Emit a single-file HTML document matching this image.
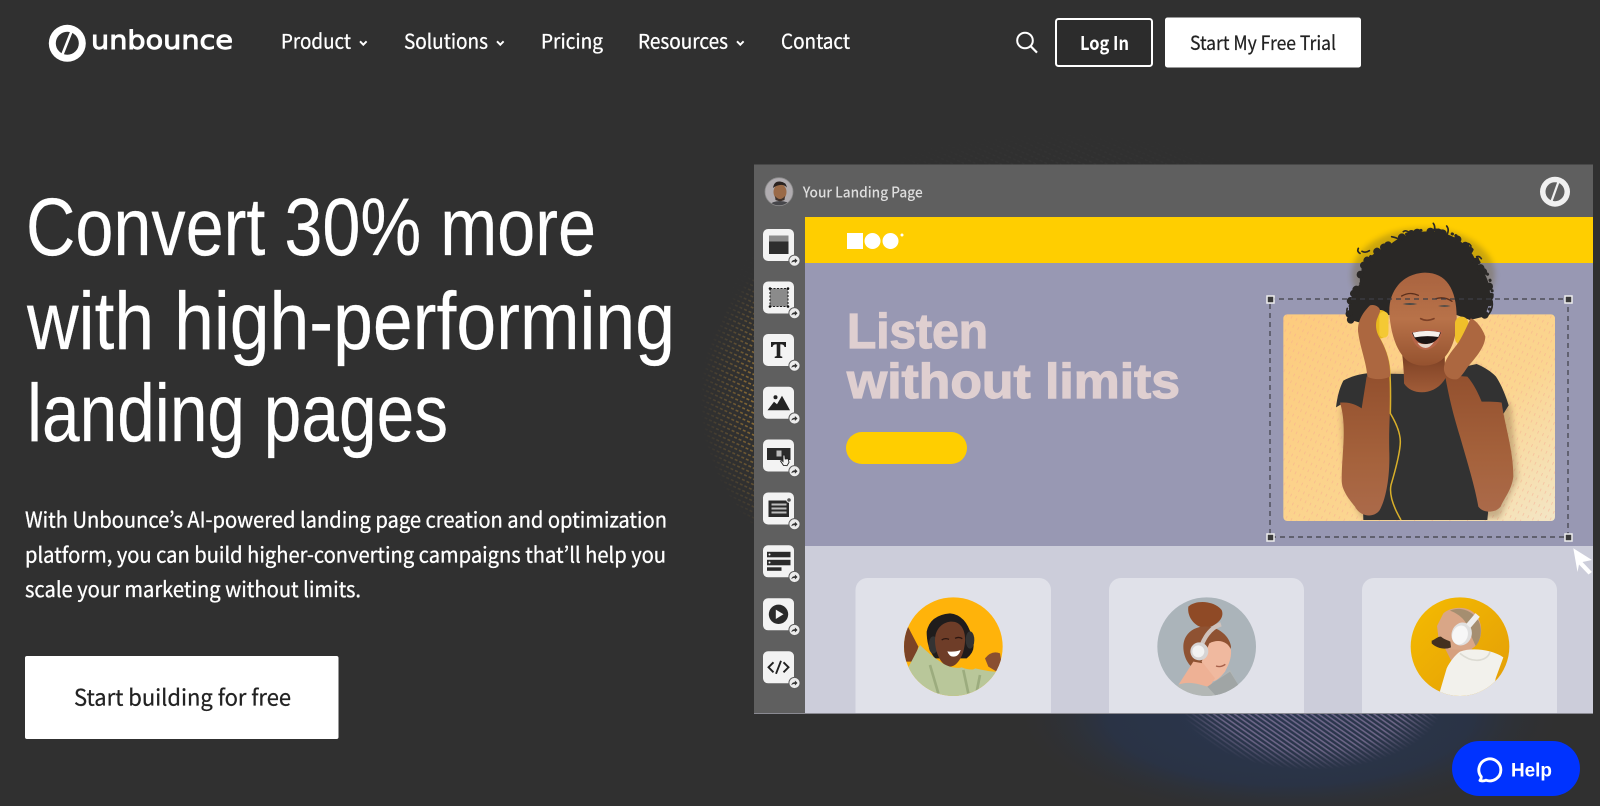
<!DOCTYPE html>
<html lang="en"><head><meta charset="utf-8"><title>Unbounce</title>
<style>
html,body{margin:0;padding:0;background:#303030;width:1600px;height:806px;overflow:hidden}
svg{display:block}
.s{font-family:"Noto Sans CJK JP","Liberation Sans",sans-serif;fill:#fff}
.w{stroke:#fff;stroke-width:.3}
.d{fill:#222;stroke:#222;stroke-width:.25}
.h{font-family:"Liberation Sans",sans-serif;fill:#fff;font-size:82px;stroke:#fff;stroke-width:.2}
.l{font-family:"Liberation Sans",sans-serif;font-weight:700;font-size:49px;fill:#dfcfd0;stroke:#dfcfd0;stroke-width:1.2}
</style></head><body>
<svg width="1600" height="806" viewBox="0 0 1600 806" xmlns="http://www.w3.org/2000/svg">
<defs>
<pattern id="dots" width="5" height="5" patternUnits="userSpaceOnUse" patternTransform="rotate(25)"><rect width="3" height="1.6" fill="#fff"/></pattern>
<pattern id="dotO" width="5" height="5" patternUnits="userSpaceOnUse" patternTransform="rotate(25)"><rect width="3" height="1.6" fill="#c18f38"/></pattern>
<pattern id="dotL" width="4" height="4" patternUnits="userSpaceOnUse" patternTransform="rotate(35)"><rect width="4" height="1.6" fill="#a28db8"/></pattern>
<pattern id="dash" width="16" height="22" patternUnits="userSpaceOnUse" patternTransform="rotate(25)"><rect width="2.5" height="9" fill="#f6a890" opacity=".55"/></pattern>
<radialGradient id="f1"><stop offset="0" stop-color="#fff"/><stop offset=".72" stop-color="#fff"/><stop offset="1" stop-color="#000"/></radialGradient>
<radialGradient id="f2"><stop offset="0" stop-color="#fff"/><stop offset=".45" stop-color="#999"/><stop offset="1" stop-color="#000"/></radialGradient>
<radialGradient id="blue"><stop offset="0" stop-color="#2b3750"/><stop offset=".65" stop-color="#2a3345"/><stop offset="1" stop-color="#303030" stop-opacity="0"/></radialGradient>
<mask id="mL"><rect width="1600" height="806" fill="#000"/><ellipse cx="880" cy="400" rx="180" ry="180" fill="url(#f1)"/></mask>
<mask id="mT"><rect width="1600" height="806" fill="#000"/><ellipse cx="1060" cy="330" rx="350" ry="205" fill="url(#f2)"/></mask>
<mask id="mB"><rect width="1600" height="806" fill="#000"/><ellipse cx="1312" cy="700" rx="132" ry="70" fill="url(#f1)"/></mask>
<linearGradient id="ph" x1="0" y1="0" x2="1" y2="1"><stop offset="0" stop-color="#fdcb7e"/><stop offset=".6" stop-color="#fbd590"/><stop offset="1" stop-color="#f3e6c6"/></linearGradient>
<linearGradient id="sk" x1="0" y1="0" x2="0" y2="1"><stop offset="0" stop-color="#a9633f"/><stop offset=".5" stop-color="#b87249"/><stop offset="1" stop-color="#95522f"/></linearGradient>
<linearGradient id="nk" x1="0" y1="0" x2="0" y2="1"><stop offset="0" stop-color="#6f3820"/><stop offset=".45" stop-color="#8a4a2b"/><stop offset="1" stop-color="#a05c38"/></linearGradient>
<linearGradient id="ar" x1="0" y1="0" x2="0" y2="1"><stop offset="0" stop-color="#93502e"/><stop offset=".6" stop-color="#a5623c"/><stop offset="1" stop-color="#ab6a4a"/></linearGradient>
<linearGradient id="y3" x1="0" y1="0" x2="1" y2="1"><stop offset="0" stop-color="#f6bd00"/><stop offset="1" stop-color="#e29c08"/></linearGradient>
<clipPath id="c1"><circle cx="160" cy="170" r="148"/></clipPath>
<clipPath id="c2"><circle cx="170" cy="170" r="148"/></clipPath>
<clipPath id="c3"><circle cx="165" cy="170" r="148"/></clipPath>
<clipPath id="cA"><circle cx="779" cy="191.7" r="14"/></clipPath>
<clipPath id="pb"><rect x="0" y="-50" width="1020" height="951"/></clipPath>
<filter id="bl" x="-30%" y="-30%" width="160%" height="160%"><feGaussianBlur stdDeviation="9"/></filter>
<g id="bd"><rect width="31" height="32" rx="5" fill="#f3f3f3"/><circle cx="31.5" cy="31.7" r="5.6" fill="#ececec" stroke="#5d5d5d" stroke-width="1"/><path d="M28.3 33.8q.6-3 3.6-3v-1.6l2.6 2.5-2.6 2.5v-1.6q-2 0-3.6 1.2z" fill="#333"/></g>
</defs>
<rect width="1600" height="806" fill="#303030"/>

<!-- glows -->
<ellipse cx="1290" cy="715" rx="280" ry="108" fill="url(#blue)"/>
<g mask="url(#mL)" opacity=".62"><rect x="680" y="200" width="90" height="400" fill="url(#dotO)"/></g>
<g mask="url(#mT)" opacity=".1"><rect width="1600" height="806" fill="url(#dots)"/></g>
<g mask="url(#mB)" opacity=".55"><rect x="1150" y="700" width="340" height="100" fill="url(#dotL)"/></g>

<!-- nav -->
<circle cx="67.3" cy="43.3" r="18.5" fill="#fff"/>
<circle cx="67.3" cy="43.3" r="11.5" fill="#303030"/>
<path d="M72.500 29 61 58" stroke="#fff" stroke-width="2.600" fill="none"/>
<text x="91" y="49" font-family="DejaVu Sans,sans-serif" font-size="26" fill="#fff" stroke="#fff" stroke-width=".9" textLength="142" lengthAdjust="spacingAndGlyphs">unbounce</text>
<g>
<text class="s w" x="281" y="48.3" font-size="20" textLength="70" lengthAdjust="spacingAndGlyphs">Product</text>
<text class="s w" x="404" y="48.3" font-size="20" textLength="84" lengthAdjust="spacingAndGlyphs">Solutions</text>
<text class="s w" x="541" y="48.3" font-size="20" textLength="62" lengthAdjust="spacingAndGlyphs">Pricing</text>
<text class="s w" x="638" y="48.3" font-size="20" textLength="90" lengthAdjust="spacingAndGlyphs">Resources</text>
<text class="s w" x="781" y="48.3" font-size="20" textLength="69" lengthAdjust="spacingAndGlyphs">Contact</text>
</g>
<g fill="none" stroke="#fff" stroke-width="1.9"><path d="M360 41.300l3.300 3.400 3.300-3.400"/><path d="M497 41.300l3.300 3.400 3.300-3.400"/><path d="M737 41.300l3.300 3.400 3.300-3.400"/></g>
<circle cx="1025" cy="40.500" r="7.800" fill="none" stroke="#fff" stroke-width="2"/><path d="M1030.500 46l6.500 6.600" stroke="#fff" stroke-width="2.200"/>
<rect x="1056" y="19" width="96" height="47" rx="2.500" fill="#2c2c2c" stroke="#fff" stroke-width="2"/>
<text class="s" x="1080" y="50" font-size="19" font-weight="700" textLength="49" lengthAdjust="spacingAndGlyphs">Log In</text>
<rect x="1165" y="17.500" width="196" height="50" rx="2.500" fill="#fff"/>
<text class="s d" x="1190" y="50" font-size="19.500" textLength="146" lengthAdjust="spacingAndGlyphs">Start My Free Trial</text>

<!-- hero -->
<text class="h" x="26" y="255" textLength="570" lengthAdjust="spacingAndGlyphs">Convert 30% more</text>
<text class="h" x="27" y="349" textLength="648" lengthAdjust="spacingAndGlyphs">with high-performing</text>
<text class="h" x="27" y="441" textLength="421" lengthAdjust="spacingAndGlyphs">landing pages</text>
<text class="s w" x="25" y="527.700" font-size="21.500" textLength="642" lengthAdjust="spacingAndGlyphs">With Unbounce’s AI-powered landing page creation and optimization</text>
<text class="s w" x="25" y="562.700" font-size="21.500" textLength="641" lengthAdjust="spacingAndGlyphs">platform, you can build higher-converting campaigns that’ll help you</text>
<text class="s w" x="25" y="597.200" font-size="21.500" textLength="336" lengthAdjust="spacingAndGlyphs">scale your marketing without limits.</text>
<rect x="25" y="656" width="313.500" height="83" rx="2" fill="#fff"/>
<text class="s d" x="74" y="705.700" font-size="22.500" textLength="217" lengthAdjust="spacingAndGlyphs">Start building for free</text>

<!-- mockup -->
<rect x="754" y="164.500" width="839" height="548.500" fill="#5f5f5f"/>
<rect x="805" y="217" width="788" height="46" fill="#ffce00"/>
<rect x="805" y="263" width="788" height="283" fill="#9898b3"/>
<rect x="805" y="546" width="788" height="167" fill="#cccdda"/>
<rect x="754" y="713" width="839" height="1" fill="#8a8a92"/>
<g clip-path="url(#cA)"><rect x="765" y="177" width="28" height="30" fill="#b0acb0"/><ellipse cx="780" cy="192" rx="6.500" ry="8" fill="#9a6a48"/><path d="M773 188q1-7 7-6.500t7 6q-3-3-7-2.500t-7 3z" fill="#2a2220"/><path d="M775 196q5 6 10 0l-.5 4-4.500 1.500-4.500-1.500z" fill="#3e322c"/><path d="M768 207q3-6 12-6t12 6z" fill="#46464a"/></g>
<circle cx="779" cy="191.700" r="14" fill="none" stroke="#8c8c8c" stroke-width=".8"/>
<text class="s" x="802.700" y="197.300" font-size="14.500" font-weight="500" style="fill:#dedede" textLength="120" lengthAdjust="spacingAndGlyphs">Your Landing Page</text>
<circle cx="1555" cy="191.700" r="15" fill="#f0f0f0"/><circle cx="1555" cy="191.700" r="9.500" fill="#5f5f5f"/><path d="M1559.500 179 1550.500 204" stroke="#f0f0f0" stroke-width="2.200"/>

<rect x="847" y="233" width="16" height="16" fill="#fff"/><circle cx="872.500" cy="241" r="8" fill="#fff"/><circle cx="890.500" cy="241" r="8" fill="#fff"/><circle cx="902" cy="235" r="1.500" fill="#fff"/>
<text class="l" x="847" y="348" textLength="141" lengthAdjust="spacingAndGlyphs">Listen</text>
<text class="l" x="847" y="398" textLength="333" lengthAdjust="spacingAndGlyphs">without limits</text>
<rect x="846" y="432" width="121" height="32" rx="16" fill="#ffce00"/>

<!-- sidebar icons -->
<g transform="translate(763 229)"><use href="#bd"/><rect x="6" y="6.500" width="19.500" height="6" fill="#8b8b8b"/><rect x="6" y="12.500" width="19.500" height="12.500" fill="#2d2d2d"/></g>
<g transform="translate(763 281.500)"><use href="#bd"/><rect x="7" y="7" width="18" height="18" fill="#8b8b8b" stroke="#222" stroke-width="1.100" stroke-dasharray="2 1.500"/><g fill="#111"><circle cx="7" cy="7" r="1.300"/><circle cx="25" cy="7" r="1.300"/><circle cx="7" cy="25" r="1.300"/><circle cx="25" cy="25" r="1.300"/></g></g>
<g transform="translate(763 334)"><use href="#bd"/><path d="M8 8h15v5h-1.500q-.5-2.500-3-2.600h-1.200v11.600l2 .7v1.300h-7.600V22.700l2-.7V10.400h-1.200q-2.500.1-3 2.600H8z" fill="#222"/></g>
<g transform="translate(763 386.800)"><use href="#bd"/><circle cx="12.500" cy="10.500" r="2" fill="#222"/><path d="M4.500 23.500 11 15l3 2.500L19 9l8 14.500z" fill="#222"/></g>
<g transform="translate(763 439.500)"><use href="#bd"/><rect x="4" y="8.500" width="23.500" height="12" fill="#2a2a2a"/><rect x="13.500" y="11" width="5" height="6" fill="#bbb"/><path d="M20 15.500h1.800l.4 4 3-.3.8 3.700-2 3.300-3.500-.3-3-4.400 1.500-.5 1 1z" fill="#f3f3f3" stroke="#222" stroke-width=".9"/></g>
<g transform="translate(763 492.500)"><use href="#bd"/><rect x="5.500" y="8" width="20.500" height="16.500" fill="#2a2a2a"/><g fill="#bdbdbd"><rect x="8.500" y="11" width="15" height="2"/><rect x="8.500" y="15" width="15" height="2"/><rect x="8.500" y="19" width="15" height="2"/></g><circle cx="26" cy="7.500" r="2.300" fill="#555" stroke="#f3f3f3" stroke-width="1"/></g>
<g transform="translate(763 545.300)"><use href="#bd"/><rect x="4" y="6.500" width="23.500" height="5.500" fill="#2a2a2a"/><rect x="4" y="14.500" width="23.500" height="5.500" fill="#2a2a2a"/><rect x="4" y="22" width="14.500" height="3.500" fill="#2a2a2a"/><circle cx="6.500" cy="9.200" r="1" fill="#eee"/><circle cx="6.500" cy="17.200" r="1" fill="#eee"/></g>
<g transform="translate(763 598.300)"><use href="#bd"/><circle cx="15.500" cy="16" r="9.700" fill="#2a2a2a"/><path d="M12.800 11.300 20.500 16l-7.700 4.700z" fill="#f3f3f3"/></g>
<g transform="translate(763 651.300)"><use href="#bd"/><path d="M10.500 11 5.500 16l5 5M20.500 11l5 5-5 5M18 9.500 13 22.500" fill="none" stroke="#222" stroke-width="1.900"/></g>

<!-- hero person (coords in 3x space) -->
<g transform="translate(1260 220) scale(.33333)">
<rect x="70" y="283" width="815" height="620" rx="12" fill="url(#ph)"/>
<rect x="70" y="283" width="815" height="620" rx="12" fill="url(#dash)"/>
<g clip-path="url(#pb)">
<ellipse cx="490" cy="165" rx="215" ry="140" fill="#6b5a20" opacity=".35" filter="url(#bl)"/>
<path d="M235 560 320 460 650 432 745 555 765 770 710 890H300L250 800z" fill="#6b4a2c" opacity=".32" filter="url(#bl)" transform="translate(8 5)"/>
<!-- hair -->
<path d="M272 300C255 250 285 215 300 190 295 130 340 95 395 70 430 40 500 25 550 40 600 50 640 95 650 130 690 170 705 230 672 290L630 300 590 285H385L300 308z" fill="#2a2826"/>
<path d="M272 300C255 250 285 215 300 190 295 130 340 95 395 70 430 40 500 25 550 40 600 50 640 95 650 130 690 170 705 230 672 290" fill="none" stroke="#2a2826" stroke-width="22" stroke-linecap="round" stroke-dasharray="1 17 1 39 1 23 1 13 1 47 1 29"/>
<path d="M275 290C258 245 290 215 305 185 300 125 345 90 400 65 435 35 505 20 555 35 605 45 645 90 655 125 695 165 712 225 680 285" fill="none" stroke="#2a2826" stroke-width="9" stroke-linecap="round" stroke-dasharray="1 31 1 11 1 43 1 19"/>
<path d="M520 10q10 14-4 28M395 50q30 5 45 30M300 100q-10-5-5-15M650 110q8-3 14 6M695 240q8 25-15 50M262 265q-5 10 8 28M560 18q8 10 2 24M430 35q8-6 16 2M328 92q-12 8-22 2M615 70q12-2 18 8" fill="none" stroke="#2a2826" stroke-width="5" stroke-linecap="round"/>
<!-- shirt -->
<path d="M228 562C232 530 238 505 250 482 270 470 300 462 320 460L432 462C455 520 535 530 562 452L650 432C670 440 695 455 708 470 725 495 738 530 746 556L725 590 715 560 682 900H310L300 565 245 552z" fill="#323232"/>
<!-- neck -->
<path d="M425 390C430 430 432 460 432 490 455 528 530 530 560 468 552 440 555 410 555 385z" fill="url(#nk)"/>
<!-- arms -->
<path d="M240 548C270 545 290 555 305 565L320 470 388 470C395 560 385 600 388 700 390 790 372 850 358 872 340 895 300 890 285 860 265 835 245 810 245 780 245 700 262 620 240 548z" fill="url(#ar)"/>
<path d="M555 465 622 470C640 490 655 520 665 545 685 545 710 545 725 548 735 620 760 690 760 770 755 810 735 830 722 860 705 880 670 880 655 860 645 800 620 720 600 650 585 600 570 550 555 465z" fill="url(#ar)"/>
<!-- face -->
<path d="M388 280C385 210 430 160 495 158 560 158 592 210 590 300 590 350 575 395 545 420 520 440 470 445 440 420 410 395 392 340 388 280z" fill="url(#sk)"/>
<rect x="335" y="270" width="50" height="85" rx="24" fill="#e9b81e"/><rect x="358" y="275" width="27" height="78" rx="13" fill="#f4c934"/>
<rect x="585" y="290" width="40" height="85" rx="20" fill="#f0c02a"/>
<path d="M355 350q30 50 34 100t2 130q30 50 30 85t-28 130q-8 40 30 105" fill="none" stroke="#d9b02a" stroke-width="4.500"/>
<!-- hands -->
<path d="M330 256C345 252 362 262 360 275L350 300C345 320 350 340 360 355 380 390 392 430 390 470 370 480 340 480 322 470 320 430 300 380 295 340 290 310 305 280 330 256z" fill="#ac6740"/>
<path d="M632 295C650 300 670 330 676 350 675 385 640 420 620 445 610 460 600 475 590 478 570 480 555 470 552 450 550 425 570 400 590 375 605 355 620 320 632 295z" fill="#ac6740"/>
<!-- features -->
<path d="M425 228q25-14 50-2M528 236q25-8 48 8" fill="none" stroke="#5c2f1b" stroke-width="4" stroke-linecap="round"/>
<path d="M428 252q20-6 44 0-22 6-44 0zM534 258q20-5 38 0-18 5-38 0z" fill="#4a4a48"/>
<path d="M482 296q18 10 40 0" fill="none" stroke="#7c4026" stroke-width="5" stroke-linecap="round"/>
<path d="M450 335Q500 322 548 332 535 385 497 390 462 388 450 335z" fill="#b76548"/>
<path d="M456 338Q500 328 543 337 530 372 497 372 468 372 456 338z" fill="#1c1414"/>
<path d="M458 338Q500 328 541 337L535 351Q500 345 464 352z" fill="#f6f0ec"/>
<path d="M472 368Q497 378 522 366 510 384 497 384 482 384 472 368z" fill="#e6d4c8"/>
</g>
</g>

<!-- selection -->
<rect x="1270" y="299" width="298" height="238" fill="none" stroke="#3f3f46" stroke-width="1.200" stroke-dasharray="5 4"/>
<g fill="#3a3a3a" stroke="#eee" stroke-width="1.500"><rect x="1267" y="296" width="7" height="7"/><rect x="1565" y="296" width="7" height="7"/><rect x="1267" y="534" width="7" height="7"/><rect x="1565" y="534" width="7" height="7"/></g>
<path d="M1573.300 548.300 1592 560 1582.500 562 1592 572 1588.500 574.500 1579 564.500 1577.500 572z" fill="#fff"/>

<!-- cards -->
<g fill="#e0e1e9">
<path d="M855.500 713V590a12 12 0 0 1 12-12h171.500a12 12 0 0 1 12 12v123z"/>
<path d="M1109 713V590a12 12 0 0 1 12-12h171a12 12 0 0 1 12 12v123z"/>
<path d="M1362 713V590a12 12 0 0 1 12-12h171a12 12 0 0 1 12 12v123z"/>
</g>

<g transform="translate(900 590) scale(.33333)"><g clip-path="url(#c1)">
<rect width="330" height="330" fill="#ffb30a"/>
<path d="M10 115 25 112 55 170 42 215 12 215z" fill="#7b4326"/>
<path d="M255 205q20-25 45-15l5 30-15 25-25-15z" fill="#8a4f30"/>
<path d="M80 125q10-50 70-55 55 5 70 90 5 25-20 45H105q-25-30-25-80z" fill="#1f1c1c"/>
<ellipse cx="100" cy="165" rx="14" ry="26" fill="#333"/><ellipse cx="210" cy="150" rx="13" ry="26" fill="#333"/>
<path d="M105 150C105 115 130 95 155 95 185 95 197 125 195 155 192 200 170 230 150 230 125 230 105 190 105 150z" fill="#6e3d28"/>
<path d="M125 150q10-7 22-2M165 145q12-6 22 1" stroke="#2c1610" stroke-width="4" fill="none"/>
<path d="M142 184q22 3 40-4-6 20-22 20-12 0-18-16z" fill="#fff"/>
<path d="M22 238 60 165C80 185 105 205 125 218 150 235 175 235 185 232 205 240 222 240 225 235 250 240 270 245 288 245L280 340H50z" fill="#b9c79a"/>
<path d="M90 225 115 310M190 240l15 70M240 255l-10 50" stroke="#9cac7e" stroke-width="8" fill="none"/>
</g></g>

<g transform="translate(1150 590) scale(.33333)"><g clip-path="url(#c2)">
<rect width="330" height="330" fill="#abb4ba"/>
<path d="M115 50C135 30 190 30 215 60 225 85 200 105 170 115 140 115 110 85 115 50z" fill="#8f4a26"/>
<path d="M100 170C100 130 135 105 175 110 215 115 240 145 243 170 240 200 190 260 140 240 115 230 100 200 100 170z" fill="#8f5232"/>
<path d="M178 160C205 145 235 155 243 180 245 205 235 225 225 245 205 270 190 280 175 270L155 215z" fill="#f0b99f"/>
<path d="M130 215 85 285 175 295 195 265 160 220z" fill="#eeb195"/>
<path d="M80 330 82 285C120 270 150 285 175 290L240 240 268 290 250 325 200 330z" fill="#b3b7b5"/>
<path d="M172 290 240 245 268 290 250 325 200 320z" fill="#a0a5a5"/>
<path d="M198 228q15 5 28-5" fill="none" stroke="#a6604a" stroke-width="4"/>
<path d="M155 165q20-50 58-62" fill="none" stroke="#cfc2bc" stroke-width="13"/>
<circle cx="148" cy="184" r="27" fill="#d6d4d4"/><circle cx="145" cy="184" r="18" fill="#f2f2f2"/>
</g></g>

<g transform="translate(1405 590) scale(.33333)"><g clip-path="url(#c3)">
<rect width="330" height="330" fill="url(#y3)"/>
<path d="M120 175 128 150 205 150 195 215 140 215z" fill="#d69f7e"/>
<path d="M96 108 115 70C135 52 165 52 180 55 215 62 232 95 228 130 225 160 205 178 190 180L130 178 100 140z" fill="#d9a687"/>
<path d="M135 62C165 48 205 62 222 95 232 120 228 150 212 168L195 130C190 100 170 75 135 62z" fill="#a58e70"/>
<path d="M80 152C88 150 100 138 108 140 120 150 128 150 136 155L138 172C120 180 95 175 80 160z" fill="#43301f"/>
<path d="M100 320 125 235C135 215 150 195 165 185 200 172 260 178 295 202L272 265 262 330z" fill="#f2f1ec"/>
<path d="M165 190q30 25 60 20 25-5 30-25" fill="none" stroke="#dcdbd3" stroke-width="5"/>
<ellipse cx="170" cy="132" rx="30" ry="35" fill="#e0e0e0" transform="rotate(20 170 132)"/>
<ellipse cx="165" cy="135" rx="23" ry="29" fill="#f7f7f7" transform="rotate(20 165 135)"/>
<path d="M190 108 218 75" stroke="#eee" stroke-width="17"/>
</g></g>

<!-- help -->
<rect x="1452" y="741" width="128" height="55" rx="27.500" fill="#0033ff"/>
<path d="M1480 780.500q1.500-2.200 1.200-3.800a11 11 0 1 1 4.800 3.500q-3 1.300-6 .3z" fill="none" stroke="#fff" stroke-width="2.900" stroke-linejoin="round"/>
<text x="1511" y="776.700" font-family="Liberation Sans,sans-serif" font-weight="700" font-size="19.500" fill="#fff" textLength="41" lengthAdjust="spacingAndGlyphs">Help</text>
</svg>
</body></html>
